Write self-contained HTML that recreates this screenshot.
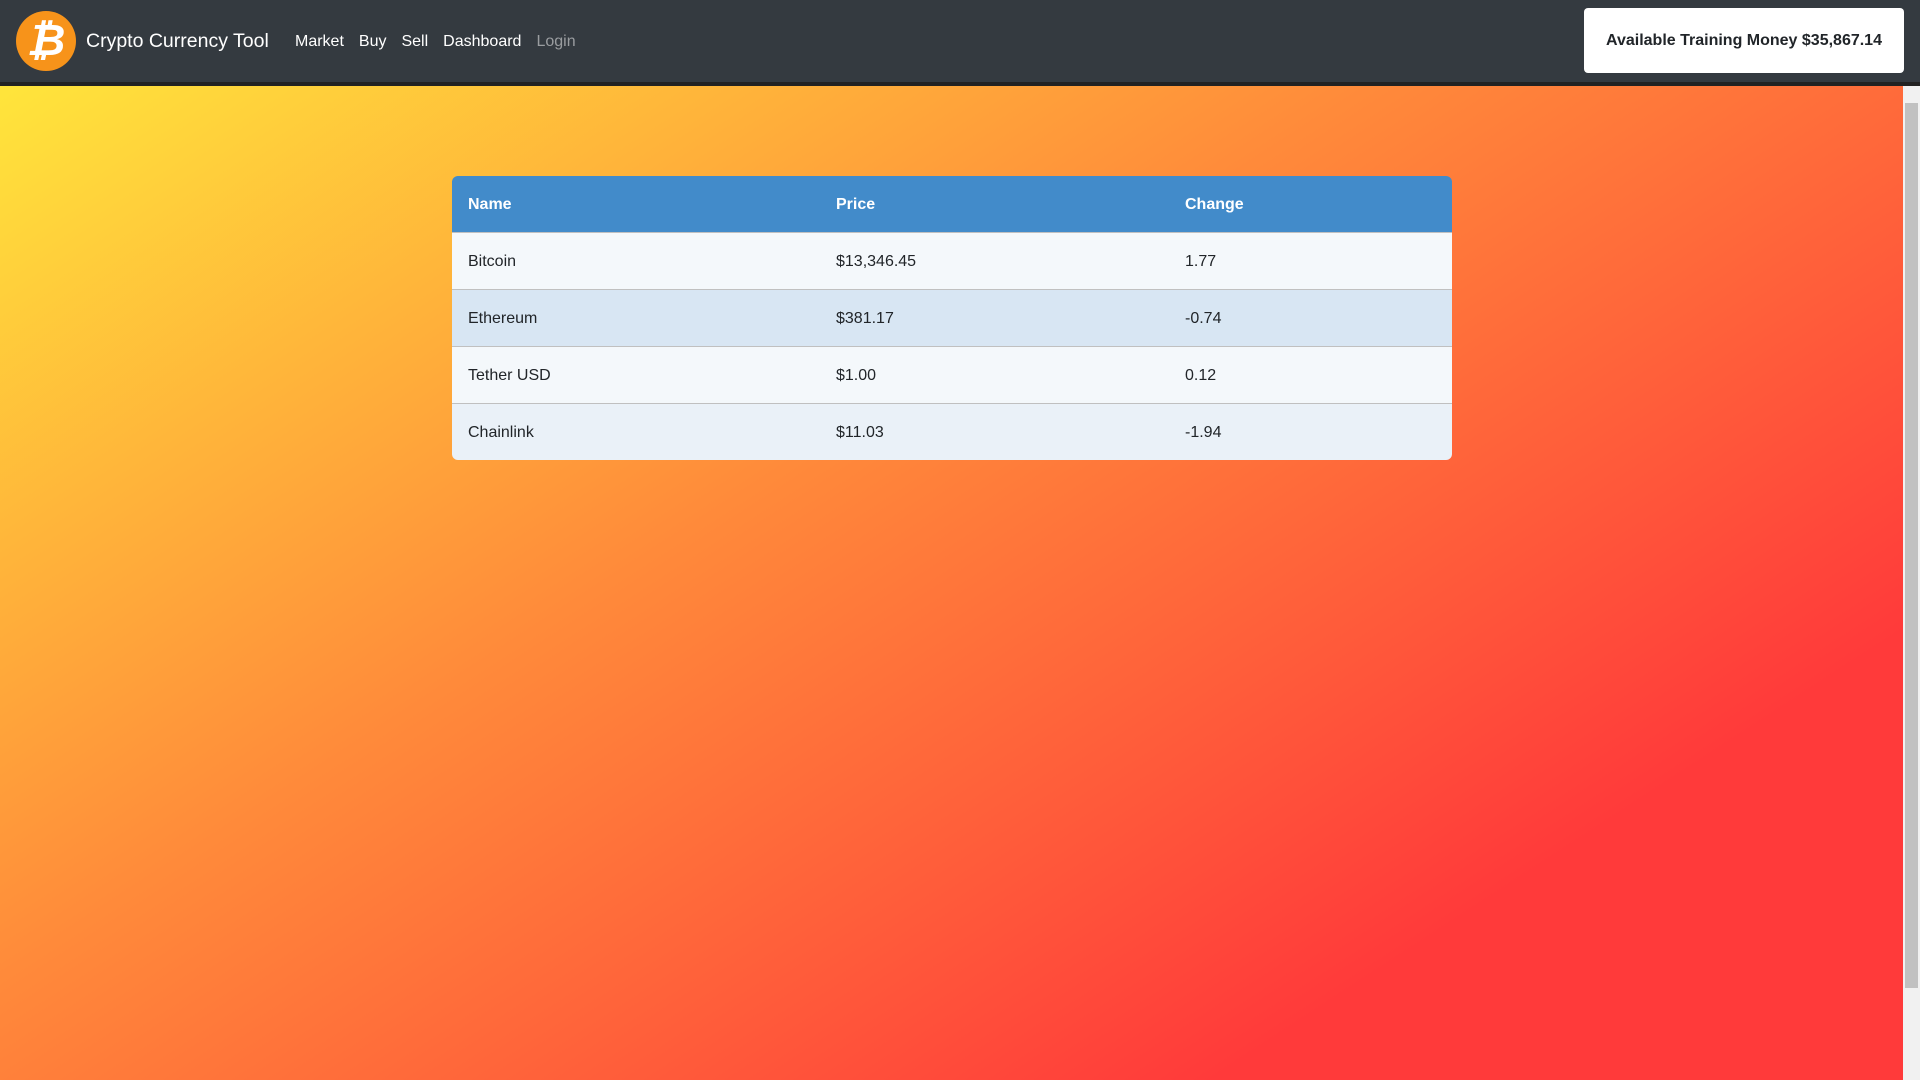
<!DOCTYPE html>
<html><head><style>
*{margin:0;padding:0;box-sizing:border-box}
html,body{width:1920px;height:1080px;overflow:hidden;font-family:"Liberation Sans",sans-serif}
.nav{position:absolute;left:0;top:0;width:1920px;background:#343a40;border-bottom:4px solid #222;height:86px}
.bg{position:absolute;left:0;top:86px;width:1903px;height:994px;background:linear-gradient(147deg,#FFE53B 0%,#FF8A3A 40%,#FF3A3A 80%,#FF3A3A 100%)}
.sb{position:absolute;left:1903px;top:86px;width:17px;height:994px;background:#f1f1f1}
.sb .th{position:absolute;left:2px;top:17px;width:13px;height:885px;background:#c1c1c1}
.logo{position:absolute;left:16px;top:11px;width:60px;height:60px;border-radius:50%;background:#f7931a;color:#fff;font-weight:bold;font-style:italic;font-size:44px;text-align:center;line-height:60px}
.brand{position:absolute;left:86px;top:30px;color:#fff;font-size:19.5px}
.links{position:absolute;left:295px;top:33px;font-size:16px;color:#fff}
.links span{margin-right:15px}
.btn{position:absolute;left:1584px;top:8px;width:320px;height:65px;background:#fff;border-radius:4px;font-weight:bold;font-size:16px;color:#212529;text-align:center;line-height:66px}
table{position:absolute;left:452px;top:176px;width:1000px;border-collapse:collapse;border-radius:6px;overflow:hidden;font-size:16px;color:#212529}
th{background:#428bca;color:#fff;text-align:left;height:56px;padding-left:16px;padding-top:2px;font-weight:bold}
td{height:57px;padding-left:16px;padding-top:2px;border-top:1px solid #c0c0c0}
tr.a td{background:#f4f8fb}tr.b td{background:#d8e6f3}tr.c td{background:#eaf1f8}
</style></head><body>
<div class="nav">
<div class="logo">₿</div>
<div class="brand">Crypto Currency Tool</div>
<div class="links"><span>Market</span><span>Buy</span><span>Sell</span><span>Dashboard</span><span style="color:#9a9da0">Login</span></div>
<div class="btn">Available Training Money $35,867.14</div>
</div>
<div class="bg"></div>
<div class="sb"><div class="th"></div></div>
<table>
<tr><th style="width:368px">Name</th><th style="width:349px">Price</th><th>Change</th></tr>
<tr class="a"><td>Bitcoin</td><td>$13,346.45</td><td>1.77</td></tr>
<tr class="b"><td>Ethereum</td><td>$381.17</td><td>-0.74</td></tr>
<tr class="a"><td>Tether USD</td><td>$1.00</td><td>0.12</td></tr>
<tr class="c"><td>Chainlink</td><td>$11.03</td><td>-1.94</td></tr>
</table>
</body></html>
